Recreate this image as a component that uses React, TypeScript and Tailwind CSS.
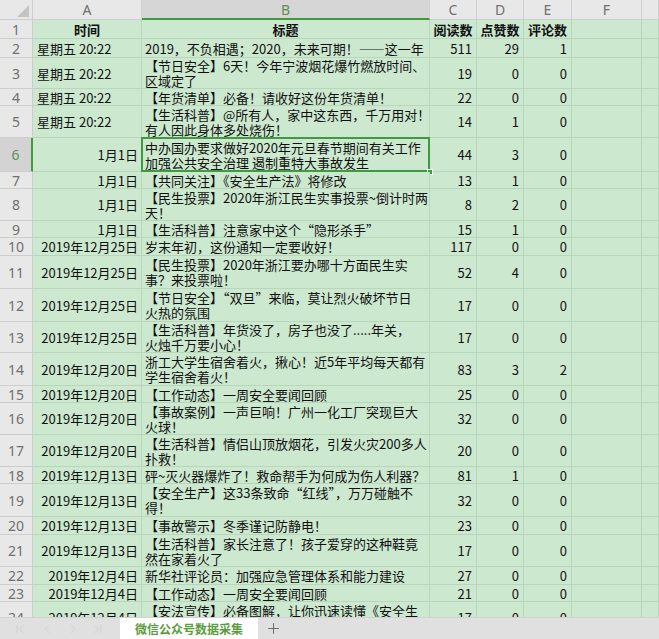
import React from "react";
import { ChevronFirst, ChevronLast, ChevronLeft, ChevronRight, Plus } from "lucide-react";

type Row = {
  n: number;
  h: string;
  a: string;
  right: boolean;
  b: string[];
  c: string;
  d: string;
  e: string;
};

const rows: Row[] = [
  { n: 2, h: "h-[19px]", a: "星期五 20:22", right: false, b: ["2019，不负相遇；2020，未来可期！——这一年"], c: "511", d: "29", e: "1" },
  { n: 3, h: "h-[31px]", a: "星期五 20:22", right: false, b: ["【节日安全】6天！今年宁波烟花爆竹燃放时间、", "区域定了"], c: "19", d: "0", e: "0" },
  { n: 4, h: "h-[17px]", a: "星期五 20:22", right: false, b: ["【年货清单】必备！请收好这份年货清单！"], c: "22", d: "0", e: "0" },
  { n: 5, h: "h-[32px]", a: "星期五 20:22", right: false, b: ["【生活科普】@所有人，家中这东西，千万用对！", "有人因此身体多处烧伤！"], c: "14", d: "1", e: "0" },
  { n: 6, h: "h-[34px]", a: "1月1日", right: true, b: ["中办国办要求做好2020年元旦春节期间有关工作", "加强公共安全治理 遏制重特大事故发生"], c: "44", d: "3", e: "0" },
  { n: 7, h: "h-[17px]", a: "1月1日", right: true, b: ["【共同关注】《安全生产法》将修改"], c: "13", d: "1", e: "0" },
  { n: 8, h: "h-[32px]", a: "1月1日", right: true, b: ["【民生投票】2020年浙江民生实事投票~倒计时两", "天！"], c: "8", d: "2", e: "0" },
  { n: 9, h: "h-[17px]", a: "1月1日", right: true, b: ["【生活科普】注意家中这个“隐形杀手”"], c: "15", d: "1", e: "0" },
  { n: 10, h: "h-[18px]", a: "2019年12月25日", right: true, b: ["岁末年初，这份通知一定要收好！"], c: "117", d: "0", e: "0" },
  { n: 11, h: "h-[33px]", a: "2019年12月25日", right: true, b: ["【民生投票】2020年浙江要办哪十方面民生实", "事？来投票啦！"], c: "52", d: "4", e: "0" },
  { n: 12, h: "h-[33px]", a: "2019年12月25日", right: true, b: ["【节日安全】“双旦”来临，莫让烈火破坏节日", "火热的氛围"], c: "17", d: "0", e: "0" },
  { n: 13, h: "h-[31px]", a: "2019年12月25日", right: true, b: ["【生活科普】年货没了，房子也没了.....年关，", "火烛千万要小心！"], c: "17", d: "0", e: "0" },
  { n: 14, h: "h-[33px]", a: "2019年12月20日", right: true, b: ["浙工大学生宿舍着火，揪心！近5年平均每天都有", "学生宿舍着火！"], c: "83", d: "3", e: "2" },
  { n: 15, h: "h-[17px]", a: "2019年12月20日", right: true, b: ["【工作动态】一周安全要闻回顾"], c: "25", d: "0", e: "0" },
  { n: 16, h: "h-[32px]", a: "2019年12月20日", right: true, b: ["【事故案例】一声巨响！广州一化工厂突现巨大", "火球！"], c: "32", d: "0", e: "0" },
  { n: 17, h: "h-[32px]", a: "2019年12月20日", right: true, b: ["【生活科普】情侣山顶放烟花，引发火灾200多人", "扑救！"], c: "20", d: "0", e: "0" },
  { n: 18, h: "h-[17px]", a: "2019年12月13日", right: true, b: ["砰~灭火器爆炸了！救命帮手为何成为伤人利器？"], c: "81", d: "1", e: "0" },
  { n: 19, h: "h-[33px]", a: "2019年12月13日", right: true, b: ["【安全生产】这33条致命“红线”，万万碰触不", "得！"], c: "32", d: "0", e: "0" },
  { n: 20, h: "h-[18px]", a: "2019年12月13日", right: true, b: ["【事故警示】冬季谨记防静电！"], c: "23", d: "0", e: "0" },
  { n: 21, h: "h-[32px]", a: "2019年12月13日", right: true, b: ["【生活科普】家长注意了！孩子爱穿的这种鞋竟", "然在家着火了"], c: "17", d: "0", e: "0" },
  { n: 22, h: "h-[18px]", a: "2019年12月4日", right: true, b: ["新华社评论员：加强应急管理体系和能力建设"], c: "27", d: "0", e: "0" },
  { n: 23, h: "h-[17px]", a: "2019年12月4日", right: true, b: ["【工作动态】一周安全要闻回顾"], c: "21", d: "0", e: "0" },
  { n: 24, h: "h-[32px]", a: "2019年12月4日", right: true, b: ["【安法宣传】必备图解，让你迅速读懂《安全生", "产法》"], c: "17", d: "0", e: "0" },
];

const grid = "grid grid-cols-[33px_109px_288px_47px_47px_48px_70px_17px]";
const cell = "border-r border-b border-[#b9d5bc] bg-[#cce8cf]";
const rowHead =
  "flex items-center justify-center border-r border-b border-[#cdcdcd] bg-[#e8e8e8] text-[14px] text-[#707070] font-['Noto_Sans',sans-serif]";
const colHead =
  "flex items-center justify-center border-r border-b border-[#d0d0d0] bg-[#e8e8e8] text-[14px] text-[#707070] font-['Noto_Sans',sans-serif]";

export default function App() {
  return (
    <div
      lang="zh-CN"
      className="w-[659px] h-[639px] overflow-hidden flex flex-col bg-[#e0e0e0] font-['Noto_Sans_CJK_SC',sans-serif] text-[13px] text-[#111] leading-[15px]"
    >
      <div className="flex-1 overflow-hidden">
        {/* column headers */}
        <div className={`${grid} h-[20px]`}>
          <div className="relative border-r border-b border-[#cdcdcd] bg-[#e8e8e8]">
            <svg className="absolute right-[3px] bottom-[2px]" width="12" height="12" viewBox="0 0 12 12">
              <polygon points="12,0 12,12 0,12" fill="#c4c4c4" />
            </svg>
          </div>
          <div className={colHead}>A</div>
          <div className="flex items-center justify-center border-r border-[#d0d0d0] border-b-2 border-b-[#3f9b40] bg-[#d6d6d6] text-[14px] text-[#5f8d5f] font-['Noto_Sans',sans-serif]">
            B
          </div>
          <div className={colHead}>C</div>
          <div className={colHead}>D</div>
          <div className={colHead}>E</div>
          <div className={colHead}>F</div>
          <div className={colHead}></div>
        </div>

        {/* header row 1 */}
        <div className={`${grid} h-[19px]`}>
          <div className={rowHead}>1</div>
          <div className={`${cell} flex items-center justify-center font-bold`}>时间</div>
          <div className={`${cell} flex items-center justify-center font-bold`}>标题</div>
          <div className={`${cell} flex items-center justify-center font-bold whitespace-nowrap`}>阅读数</div>
          <div className={`${cell} flex items-center justify-center font-bold whitespace-nowrap`}>点赞数</div>
          <div className={`${cell} flex items-center justify-center font-bold whitespace-nowrap`}>评论数</div>
          <div className={cell}></div>
          <div className={cell}></div>
        </div>

        {rows.map((r) => {
          const sel = r.n === 6;
          return (
            <div key={r.n} className={`${grid} ${r.h}`}>
              {sel ? (
                <div className="flex items-center justify-center border-b border-[#cdcdcd] border-r-2 border-r-[#3f9b40] bg-[#d3d3d3] text-[14px] text-[#5f8d5f] font-['Noto_Sans',sans-serif]">
                  {r.n}
                </div>
              ) : (
                <div className={rowHead}>{r.n}</div>
              )}
              <div
                className={`${cell} flex items-center whitespace-nowrap ${
                  r.right ? "justify-end pr-[3px]" : "justify-start pl-[4px]"
                }`}
              >
                {r.a}
              </div>
              <div className={`${cell} relative flex flex-col justify-center pl-[3px]`}>
                {r.b.map((line, i) => (
                  <div key={i} className="whitespace-nowrap">
                    {line}
                  </div>
                ))}
                {sel && (
                  <>
                    <div className="absolute left-[-1px] top-[-1px] right-[-1px] bottom-[-1px] border-2 border-[#3f9b40] pointer-events-none" />
                    <div className="absolute right-[-4px] bottom-[-4px] w-[6px] h-[6px] bg-[#3f9b40] border border-white" />
                  </>
                )}
              </div>
              <div className={`${cell} flex items-center justify-end pr-[4px]`}>{r.c}</div>
              <div className={`${cell} flex items-center justify-end pr-[4px]`}>{r.d}</div>
              <div className={`${cell} flex items-center justify-end pr-[4px]`}>{r.e}</div>
              <div className={cell}></div>
              <div className={cell}></div>
            </div>
          );
        })}
      </div>

      {/* sheet tab bar */}
      <div className="h-[22px] shrink-0 flex items-stretch bg-[#e0e0e0] border-t border-[#d2d2d2]">
        <div className="flex items-center w-[120px] text-[#c6c6c6]">
          <ChevronFirst size={14} strokeWidth={1} className="ml-[13px]" />
          <ChevronLeft size={14} strokeWidth={1} className="ml-[13px]" />
          <ChevronRight size={14} strokeWidth={1} className="ml-[12px]" />
          <ChevronLast size={14} strokeWidth={1} className="ml-[11px]" />
        </div>
        <div className="w-[138px] bg-white flex items-center justify-center text-[12px] font-bold text-[#5b9c3e]">
          微信公众号数据采集
        </div>
        <div className="flex items-center ml-[7px] text-[#5a5a5a]">
          <Plus size={17} strokeWidth={1.2} />
        </div>
      </div>
    </div>
  );
}
